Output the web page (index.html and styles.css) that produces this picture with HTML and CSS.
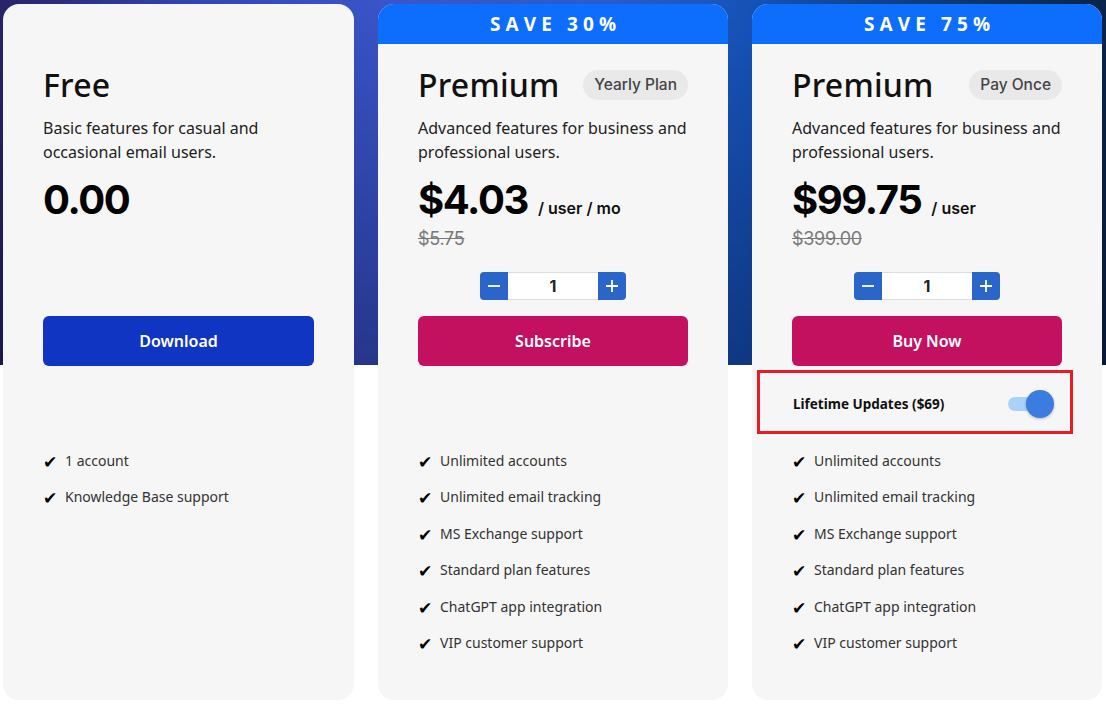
FILE: index.html
```html
<!DOCTYPE html>
<html lang="en">
<head>
<meta charset="utf-8">
<title>Pricing</title>
<link rel="stylesheet" href="styles.css">
</head>
<body>
<div class="page">
  <div class="plans">
    <section class="card">
      <div class="banner banner-empty"></div>
      <div class="body">
        <div class="head"><h2 class="title">Free</h2></div>
        <p class="desc">Basic features for casual and occasional email users.</p>
        <div class="pricing">
          <div class="price-line"><span class="price">0.00</span></div>
        </div>
        <button class="cta cta-blue">Download</button>
        <div class="addon-slot"></div>
        <ul class="features">
          <li><span class="check">✔</span>1 account</li>
          <li><span class="check">✔</span>Knowledge Base support</li>
        </ul>
      </div>
    </section>

    <section class="card">
      <div class="banner">SAVE 30%</div>
      <div class="body">
        <div class="head"><h2 class="title">Premium</h2><span class="pill">Yearly Plan</span></div>
        <p class="desc">Advanced features for business and professional users.</p>
        <div class="pricing">
          <div class="price-line"><span class="price">$4.03</span><span class="unit">/ user / mo</span></div>
          <div class="old">$5.75</div>
          <div class="stepper">
            <span class="step step-l"><svg width="14" height="14" viewBox="0 0 14 14"><path d="M1 7h12" stroke="#fff" stroke-width="1.8"/></svg></span>
            <span class="qty">1</span>
            <span class="step step-r"><svg width="14" height="14" viewBox="0 0 14 14"><path d="M1 7h12M7 1v12" stroke="#fff" stroke-width="1.8"/></svg></span>
          </div>
        </div>
        <button class="cta cta-pink">Subscribe</button>
        <div class="addon-slot"></div>
        <ul class="features">
          <li><span class="check">✔</span>Unlimited accounts</li>
          <li><span class="check">✔</span>Unlimited email tracking</li>
          <li><span class="check">✔</span>MS Exchange support</li>
          <li><span class="check">✔</span>Standard plan features</li>
          <li><span class="check">✔</span>ChatGPT app integration</li>
          <li><span class="check">✔</span>VIP customer support</li>
        </ul>
      </div>
    </section>

    <section class="card">
      <div class="banner">SAVE 75%</div>
      <div class="body">
        <div class="head"><h2 class="title">Premium</h2><span class="pill">Pay Once</span></div>
        <p class="desc">Advanced features for business and professional users.</p>
        <div class="pricing">
          <div class="price-line"><span class="price">$99.75</span><span class="unit">/ user</span></div>
          <div class="old">$399.00</div>
          <div class="stepper">
            <span class="step step-l"><svg width="14" height="14" viewBox="0 0 14 14"><path d="M1 7h12" stroke="#fff" stroke-width="1.8"/></svg></span>
            <span class="qty">1</span>
            <span class="step step-r"><svg width="14" height="14" viewBox="0 0 14 14"><path d="M1 7h12M7 1v12" stroke="#fff" stroke-width="1.8"/></svg></span>
          </div>
        </div>
        <button class="cta cta-pink">Buy Now</button>
        <div class="addon-slot">
          <div class="addon">
            <span class="addon-label">Lifetime Updates ($69)</span>
            <span class="switch"><span class="track"></span><span class="knob"></span></span>
          </div>
        </div>
        <ul class="features">
          <li><span class="check">✔</span>Unlimited accounts</li>
          <li><span class="check">✔</span>Unlimited email tracking</li>
          <li><span class="check">✔</span>MS Exchange support</li>
          <li><span class="check">✔</span>Standard plan features</li>
          <li><span class="check">✔</span>ChatGPT app integration</li>
          <li><span class="check">✔</span>VIP customer support</li>
        </ul>
      </div>
    </section>
  </div>
</div>
</body>
</html>
```

FILE: styles.css
```css
* { box-sizing: border-box; }

html, body {
  margin: 0;
  padding: 0;
  background: #ffffff;
}

.page {
  width: 1106px;
  height: 707px;
  overflow: hidden;
  background:
    linear-gradient(to bottom, rgba(0, 0, 20, 0) 0%, rgba(0, 0, 25, 0.35) 100%) 0 0 / 100% 365px no-repeat,
    linear-gradient(to right, #28236a 0%, #3346b8 18%, #3a55c9 35%, #2a5ccb 55%, #1553b8 68%, #0d3a78 85%, #0a2448 100%) 0 0 / 100% 365px no-repeat,
    #ffffff;
  padding: 4px 0 0 3px;
  font-family: "Noto Sans", "Open Sans", sans-serif;
  color: #111;
}

.plans {
  display: grid;
  grid-template-columns: 351px 350px 350px;
  column-gap: 24px;
}

.card {
  background: #f6f6f6;
  border-radius: 16px;
  height: 696px;
  overflow: hidden;
  display: flex;
  flex-direction: column;
}

.banner {
  height: 40px;
  background: #0d6efd;
  color: #fff;
  font-family: "Open Sans", "Noto Sans", sans-serif;
  font-weight: 700;
  font-size: 19px;
  letter-spacing: 5.1px;
  text-indent: 5.1px;
  line-height: 41px;
  text-align: center;
}

.banner-empty {
  background: transparent;
}

.body {
  padding: 21px 40px 0 40px;
  display: flex;
  flex-direction: column;
}

.head {
  height: 40px;
  display: flex;
  align-items: center;
  justify-content: space-between;
}

.title {
  margin: 0;
  font-family: "Noto Sans", sans-serif;
  font-weight: 500;
  font-size: 32px;
  line-height: 40px;
  letter-spacing: 0.2px;
  color: #111;
}

.pill {
  height: 30px;
  line-height: 30px;
  padding: 0 11px;
  border-radius: 15px;
  background: #e9e9e9;
  color: #444;
  font-family: "Inter", sans-serif;
  font-weight: 500;
  font-size: 15.5px;
}

.desc {
  margin: 11px 0 0 0;
  font-size: 16px;
  line-height: 24px;
  color: #222;
}

.pricing {
  margin-top: 12px;
  min-height: 124px;
  display: flex;
  flex-direction: column;
}

.price-line {
  display: flex;
  align-items: baseline;
  height: 48px;
  line-height: 48px;
}

.price {
  font-family: "Inter", sans-serif;
  font-weight: 700;
  font-size: 40px;
  letter-spacing: -1.4px;
  color: #000;
}

.unit {
  font-family: "Inter", sans-serif;
  font-weight: 600;
  font-size: 16px;
  margin-left: 10px;
  color: #111;
}

.old {
  margin-top: 3px;
  font-family: "Inter", sans-serif;
  font-size: 18px;
  line-height: 24px;
  letter-spacing: -0.3px;
  color: #7a7a7a;
  text-decoration: line-through;
}

.stepper {
  margin-top: 21px;
  align-self: center;
  display: flex;
  height: 28px;
}

.step {
  width: 28px;
  height: 28px;
  background: #2a66c9;
  display: flex;
  align-items: center;
  justify-content: center;
}

.step-l { border-radius: 4px 0 0 4px; }
.step-r { border-radius: 0 4px 4px 0; }

.qty {
  width: 90px;
  height: 28px;
  background: #fff;
  border-top: 1px solid #dcdde3;
  border-bottom: 1px solid #dcdde3;
  text-align: center;
  line-height: 26px;
  font-family: "Inter", sans-serif;
  font-weight: 700;
  font-size: 16px;
  color: #222;
}

.cta {
  margin-top: 16px;
  height: 50px;
  border: 0;
  border-radius: 6px;
  color: #fff;
  font-family: "Noto Sans", sans-serif;
  font-weight: 600;
  font-size: 16px;
  cursor: pointer;
}

.cta-blue { background: #0f35c2; }
.cta-pink { background: #c4115f; }

.addon-slot {
  margin-top: 4px;
  height: 64px;
}

.addon {
  margin-left: -35px;
  width: 316px;
  height: 64px;
  border: 3px solid #e81c24;
  display: flex;
  align-items: center;
  justify-content: space-between;
  padding: 3px 16px 0 33px;
}

.addon-label {
  font-weight: 700;
  font-size: 13.5px;
  color: #111;
}

.switch {
  position: relative;
  width: 46px;
  height: 28px;
}

.track {
  position: absolute;
  left: 0;
  top: 7px;
  width: 36px;
  height: 14px;
  border-radius: 7px;
  background: #a8d2f8;
}

.knob {
  position: absolute;
  right: 0;
  top: 0;
  width: 28px;
  height: 28px;
  border-radius: 50%;
  background: #3a7cdf;
  box-shadow: 0 1px 3px rgba(0, 0, 0, 0.25);
}

.features {
  list-style: none;
  margin: 17px 0 0 0;
  padding: 0;
  display: flex;
  flex-direction: column;
  gap: 16.4px;
}

.features li {
  display: flex;
  align-items: center;
  height: 20px;
  font-size: 14px;
  line-height: 20px;
  color: #333;
}

.check {
  font-family: "DejaVu Sans", sans-serif;
  font-size: 17px;
  line-height: 20px;
  height: 20px;
  color: #000;
  width: 22px;
  transform: translateY(1px);
}
```
